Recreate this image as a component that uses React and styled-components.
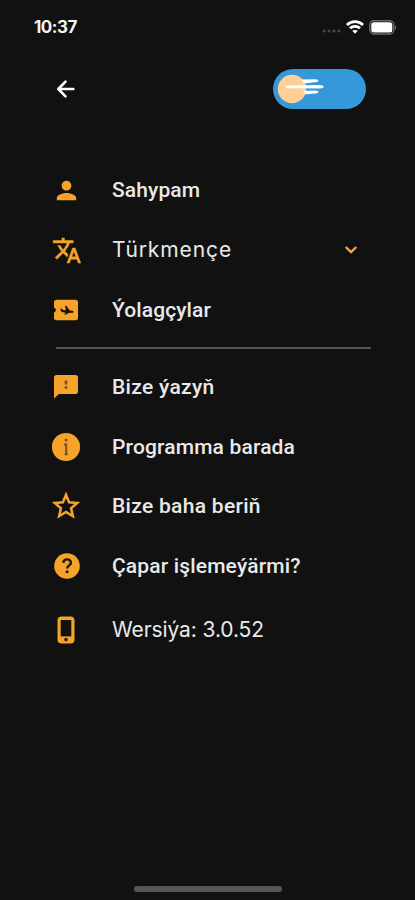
import { useState } from "react";
import styled, { createGlobalStyle } from "styled-components";
import { MdPerson } from "react-icons/md";

const GlobalStyle = createGlobalStyle`
  * {
    box-sizing: border-box;
  }

  body {
    margin: 0;
    background-color: #111111;
  }
`;

const Container = styled.div`
  width: 100%;
  height: 100vh;
  display: flex;
  flex-direction: column;
  overflow: hidden;
  background-color: #111111;
  color: #e9e9e9;
  font-family: Roboto, sans-serif;
`;

const StatusBar = styled.div`
  height: 54px;
  padding: 0 18px 0 34px;
  display: flex;
  align-items: center;
  justify-content: space-between;
`;

const Time = styled.span`
  font-family: Inter, sans-serif;
  font-size: 17px;
  font-weight: 700;
  letter-spacing: -0.5px;
  color: #f2f2f2;
`;

const StatusIcons = styled.div`
  display: flex;
  align-items: center;
`;

const DotsBox = styled.div`
  margin: 8px 5px 0 0;
  display: flex;
`;

const BatteryBox = styled.div`
  margin-left: 5px;
  display: flex;
`;

const Header = styled.div`
  height: 70px;
  padding: 0 49px 0 54px;
  display: flex;
  align-items: center;
  justify-content: space-between;
`;

const BackButton = styled.button`
  padding: 0;
  display: flex;
  border: none;
  background-color: transparent;
  cursor: pointer;
`;

const Toggle = styled.button`
  width: 93px;
  height: 40px;
  padding: 0;
  display: flex;
  border: none;
  border-radius: 20px;
  background-color: #3498db;
  cursor: pointer;
`;

const Menu = styled.div`
  padding: 36px 44px 0 50px;
`;

const Item = styled.div`
  height: ${(props) => props.$height || 60}px;
  display: flex;
  align-items: center;
  cursor: pointer;
`;

const IconBox = styled.div`
  width: 32px;
  margin-right: 30px;
  display: flex;
  justify-content: center;
  color: #f5a329;
`;

const Label = styled.span`
  flex: 1;
  font-family: ${(props) => (props.$wide ? "Inter" : "Roboto")}, sans-serif;
  font-size: 21px;
  font-weight: ${(props) => (props.$wide ? 400 : 500)};
  letter-spacing: ${(props) => props.$spacing || 0}px;
  line-height: 26px;
  white-space: nowrap;
`;

const ChevronBox = styled.div`
  margin-right: 13px;
  display: flex;
`;

const Divider = styled.div`
  height: 2px;
  margin: 7px 0 8px 6px;
  background-color: #555555;
`;

const HomeIndicator = styled.div`
  width: 148px;
  height: 6px;
  margin: auto auto 8px 134px;
  border-radius: 3px;
  background-color: #555555;
`;

const SignalDots = () => (
  <svg width="19" height="6" viewBox="0 0 19 6" fill="#484848">
    <circle cx="2" cy="3" r="1.5" />
    <circle cx="7" cy="3" r="1.5" />
    <circle cx="12" cy="3" r="1.5" />
    <circle cx="17" cy="3" r="1.5" />
  </svg>
);

const Wifi = () => (
  <svg width="18" height="14" viewBox="0 0 18 14" fill="none" stroke="#fff" strokeWidth="2.8">
    <path d="M1 4.9C5.4.6 12.6.6 17 4.9" />
    <path d="M4 8.3c2.8-2.6 7.2-2.6 10 0" />
    <path d="M9 13.8 6.2 10.8c1.5-1.2 4.1-1.2 5.6 0z" fill="#fff" stroke="none" />
  </svg>
);

const Battery = () => (
  <svg width="28" height="15" viewBox="0 0 28 15">
    <rect x="0.8" y="0.8" width="24" height="13.2" rx="4" fill="none" stroke="#6b6b6b" strokeWidth="1.4" />
    <rect x="2.3" y="2.3" width="21" height="10.2" rx="2.5" fill="#fff" />
    <path d="M26 5.2c1.7.7 1.7 3.8 0 4.5z" fill="#777" />
  </svg>
);

const ArrowBack = () => (
  <svg width="24" height="24" viewBox="0 0 24 24" fill="none" stroke="#fff" strokeWidth="2.6" strokeLinecap="round" strokeLinejoin="round">
    <path d="M19.3 12H4.3M11.5 4.7 4.3 12l7.2 7.3" />
  </svg>
);

// sun with three passing clouds
const Sun = () => (
  <svg width="93" height="40" viewBox="0 0 93 40">
    <circle cx="19" cy="20" r="14.2" fill="#ffcf96" />
    <path d="M28 10.4 42 10.3c4.5.2 4.5 2.6 0 3L31 14.6zM14 16.4l33-.4c5 .3 5 3.2 0 3.5l-33-.3c-2-.3-2-2.5 0-2.8zM31.5 21.8l10.5-.2c4.5.3 4.5 2.7 0 3l-12 1z" fill="#fff" />
  </svg>
);

const Translate = () => (
  <svg width="33" height="31" viewBox="-1.5 0 25.5 24" fill="currentColor" stroke="currentColor" strokeWidth="0.4">
    <path d="m12.87 15.07-2.54-2.51.03-.03A17.5 17.5 0 0 0 14.07 6H17V4h-7V2H8v2H1v2h11.17C11.5 7.92 10.44 9.75 9 11.35 8.07 10.32 7.3 9.19 6.69 8h-2c.73 1.63 1.73 3.17 2.98 4.56l-5.09 5.02L4 19l5-5 3.11 3.11zM18.5 10h-2L12 22h2l1.12-3h4.75L21 22h2zm-2.62 7 1.62-4.33L19.12 17z" />
  </svg>
);

const Ticket = () => (
  <svg width="26" height="22" viewBox="0 0 26 22">
    <path d="M3.5.7h19A2.5 2.5 0 0 1 25 3.2v15.6a2.5 2.5 0 0 1-2.5 2.5h-19A2.5 2.5 0 0 1 1 18.8v-5.3a2.6 2.6 0 0 0 0-5V3.2A2.5 2.5 0 0 1 3.5.7z" fill="#f5a329" />
    <path d="M7.4 9.4l1.1.1 1.5 1.4 3 .3-1.1-4.4 1.6.3 3.3 4.5 2.7.1c1.5.2 1.5 1.9 0 2l-4 .2-2.5 1.5h-2l1.8-1.7-3.8-.8c-1.2-.6-1.5-2-1.6-3.5z" fill="#191309" />
  </svg>
);

const Feedback = () => (
  <svg width="26" height="24" viewBox="0 0 26 24">
    <path d="M3.5 0h19A2.5 2.5 0 0 1 25 2.5v14a2.5 2.5 0 0 1-2.5 2.5H6l-5 4.5v-21A2.5 2.5 0 0 1 3.5 0z" fill="#f5a329" />
    <path d="M11.7 5.5h2.6v4h-2.6zM11.7 11.3h2.6v2.4h-2.6z" fill="#7a541c" />
  </svg>
);

const Info = () => (
  <svg width="30" height="30" viewBox="0 0 30 30">
    <circle cx="15" cy="15" r="14.1" fill="#f5a329" />
    <circle cx="15" cy="7.9" r="1.5" fill="#77521c" />
    <path d="M13 12.4h2.2v10M13.6 22.2h3.2" fill="none" stroke="#77521c" strokeWidth="2" />
  </svg>
);

const Star = () => (
  <svg width="30" height="30" viewBox="0 0 30 30" fill="none" stroke="#f5a329" strokeWidth="2.5">
    <path d="m15 3.8 3.1 7.5 8.1.7-6.1 5.3 1.8 7.9-6.9-4.2-6.9 4.2 1.8-7.9L3.8 12l8.1-.7z" />
  </svg>
);

const Help = () => (
  <svg width="28" height="26" viewBox="-2 0 28 26">
    <circle cx="13" cy="13" r="12.8" fill="#f5a329" />
    <path d="M9.3 9.9c.3-4.6 7.6-4.6 7.6-.2 0 2.8-3.7 2.7-3.7 5.9" fill="none" stroke="#20180d" strokeWidth="2.4" />
    <circle cx="13.1" cy="18.8" r="1.5" fill="#20180d" />
  </svg>
);

const Phone = () => (
  <svg width="18" height="28" viewBox="0 0 18 28">
    <rect x="0.5" y="0.4" width="17" height="27.2" rx="4" fill="#f5a329" />
    <rect x="3.7" y="4" width="10.6" height="16.4" fill="#111111" />
    <circle cx="9" cy="23.6" r="1.8" fill="#2a1e0c" />
  </svg>
);

const Chevron = () => (
  <svg width="14" height="10" viewBox="0 0 14 10" fill="none" stroke="#f0ab45" strokeWidth="2.3">
    <path d="M1.7 2 7 7.1 12.3 2" />
  </svg>
);

const account = [
  { text: "Sahypam", icon: <MdPerson size={29} />, spacing: 0.1 },
  { text: "Türkmençe", icon: <Translate />, wide: true, spacing: 0.9, expandable: true },
  { text: "Ýolagçylar", icon: <Ticket />, spacing: 0.1 },
];

const support = [
  { text: "Bize ýazyň", icon: <Feedback />, spacing: 0.3 },
  { text: "Programma barada", icon: <Info />, spacing: 0.16, height: 59 },
  { text: "Bize baha beriň", icon: <Star />, spacing: 0.3 },
  { text: "Çapar işlemeýärmi?", icon: <Help />, spacing: 0.16 },
  { text: "Wersiýa: 3.0.52", icon: <Phone />, wide: true, spacing: -0.1, height: 68 },
];

const MenuItem = ({ item }) => (
  <Item $height={item.height}>
    <IconBox>{item.icon}</IconBox>
    <Label $wide={item.wide} $spacing={item.spacing}>
      {item.text}
    </Label>
    {item.expandable && (
      <ChevronBox>
        <Chevron />
      </ChevronBox>
    )}
  </Item>
);

const App = () => {
  const [light, setLight] = useState(true);

  return (
    <Container>
      <GlobalStyle />
      <StatusBar>
        <Time>10:37</Time>
        <StatusIcons>
          <DotsBox>
            <SignalDots />
          </DotsBox>
          <Wifi />
          <BatteryBox>
            <Battery />
          </BatteryBox>
        </StatusIcons>
      </StatusBar>
      <Header>
        <BackButton aria-label="Yza">
          <ArrowBack />
        </BackButton>
        <Toggle role="switch" aria-checked={light} onClick={() => setLight(!light)}>
          <Sun />
        </Toggle>
      </Header>
      <Menu>
        {account.map((item) => (
          <MenuItem key={item.text} item={item} />
        ))}
        <Divider />
        {support.map((item) => (
          <MenuItem key={item.text} item={item} />
        ))}
      </Menu>
      <HomeIndicator />
    </Container>
  );
};

export default App;
